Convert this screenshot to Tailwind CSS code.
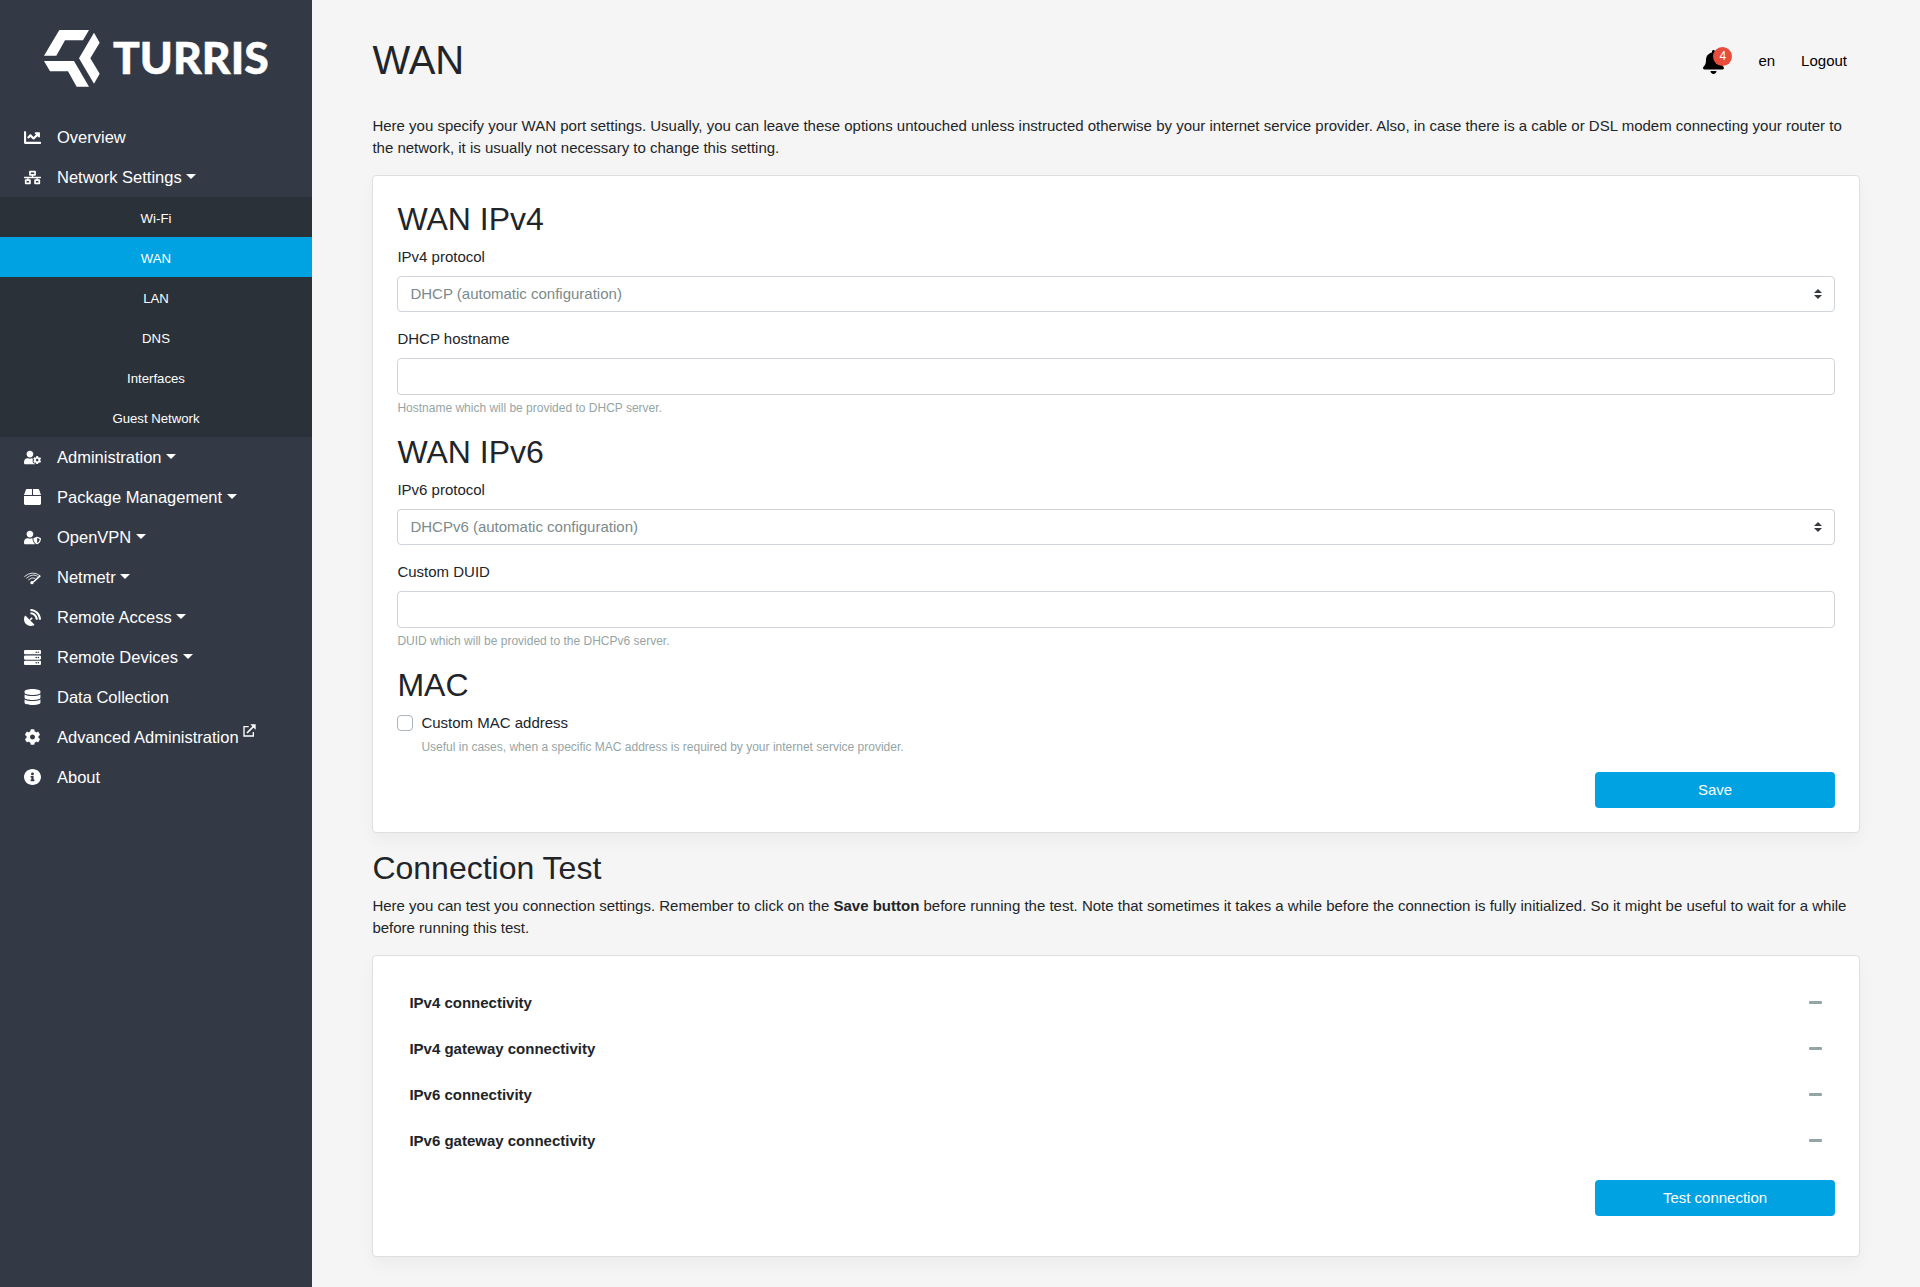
<!DOCTYPE html>
<html lang="en">
<head>
<meta charset="utf-8">
<title>WAN</title>
<script src="https://cdn.jsdelivr.net/npm/@tailwindcss/browser@4"></script>
</head>
<body class="flex h-[1287px] overflow-hidden bg-[#f5f5f5] font-['Liberation_Sans',Arial,sans-serif] text-[15px] leading-[22px] text-[#212529]">
<aside class="flex w-[312px] shrink-0 flex-col bg-[#333a46] text-[16.5px] text-white">
  <a class="mb-[30px] block pt-[29px] pl-11">
    <svg class="block h-[58px] w-[226px]" viewBox="132 87 678 174" fill="#fff">
      <path d="M178 90H267L249 121H195L169 167H132ZM132 183H222L267 260H230L204 214H150ZM282 98L299 128L271 175L299 221L282 251L237 175Z"/>
      <text x="339" y="222" font-family="Lato" font-weight="900" font-size="130" textLength="467" lengthAdjust="spacingAndGlyphs" stroke="#fff" stroke-width="1.5">TURRIS</text>
    </svg>
  </a>
  <nav class="flex flex-col">
    <a class="flex h-10 items-center pl-6"><svg class="mr-4 size-[17px]" viewBox="0 0 512 512" fill="currentColor"><path d="M496 384H64V80c0-8.84-7.16-16-16-16H16C7.16 64 0 71.16 0 80v336c0 17.67 14.33 32 32 32h464c8.84 0 16-7.16 16-16v-32c0-8.84-7.16-16-16-16zM464 96H345.94c-21.38 0-32.09 25.85-16.97 40.97l32.4 32.4L288 242.75l-73.37-73.37c-12.5-12.5-32.76-12.5-45.25 0l-68.69 68.69c-6.25 6.25-6.25 16.38 0 22.63l22.62 22.62c6.25 6.25 16.38 6.25 22.63 0L192 237.25l73.37 73.37c12.5 12.5 32.76 12.5 45.25 0l96-96 32.4 32.4c15.12 15.12 40.97 4.41 40.97-16.97V112c.01-8.84-7.15-16-15.99-16z"/></svg>Overview</a>
    <a class="flex h-10 items-center pl-6"><svg class="mr-4 size-[17px]" viewBox="0 0 640 512" fill="currentColor"><path d="M640 264v-16c0-8.84-7.16-16-16-16H344v-40h72c17.67 0 32-14.33 32-32V32c0-17.67-14.33-32-32-32H224c-17.67 0-32 14.33-32 32v128c0 17.67 14.33 32 32 32h72v40H16c-8.84 0-16 7.16-16 16v16c0 8.84 7.16 16 16 16h104v40H64c-17.67 0-32 14.33-32 32v128c0 17.67 14.33 32 32 32h160c17.67 0 32-14.33 32-32V352c0-17.67-14.33-32-32-32h-56v-40h304v40h-56c-17.67 0-32 14.33-32 32v128c0 17.67 14.33 32 32 32h160c17.67 0 32-14.33 32-32V352c0-17.67-14.33-32-32-32h-56v-40h104c8.84 0 16-7.16 16-16zM256 128V64h128v64H256zm-64 320H96v-64h96v64zm352 0h-96v-64h96v64z"/></svg>Network Settings<i class="mb-0.5 ml-[4.6px] border-x-[5px] border-t-[5px] border-x-transparent border-t-white"></i></a>
    <div class="flex flex-col bg-[#2b3139] text-center text-[13.2px] leading-[43px]">
      <a class="h-10">Wi-Fi</a>
      <a class="h-10 bg-[#00a2e2]">WAN</a>
      <a class="h-10">LAN</a>
      <a class="h-10">DNS</a>
      <a class="h-10">Interfaces</a>
      <a class="h-10">Guest Network</a>
    </div>
    <a class="flex h-10 items-center pl-6"><svg class="mr-4 size-[17px]" viewBox="0 0 640 512" fill="currentColor"><path d="M610.5 373.3c2.6-14.1 2.6-28.5 0-42.6l25.8-14.9c3-1.7 4.3-5.2 3.3-8.5-6.7-21.6-18.2-41.2-33.2-57.4-2.3-2.5-6-3.1-9-1.4l-25.8 14.9c-10.9-9.3-23.4-16.5-36.9-21.3v-29.8c0-3.4-2.4-6.4-5.7-7.1-22.3-5-45-4.8-66.2 0-3.3.7-5.7 3.7-5.7 7.1v29.8c-13.5 4.8-26 12-36.9 21.3l-25.8-14.9c-2.9-1.7-6.7-1.1-9 1.4-15 16.2-26.5 35.8-33.2 57.4-1 3.3.4 6.8 3.3 8.5l25.8 14.9c-2.6 14.1-2.6 28.5 0 42.6l-25.8 14.9c-3 1.7-4.3 5.2-3.3 8.5 6.7 21.6 18.2 41.1 33.2 57.4 2.3 2.5 6 3.1 9 1.4l25.8-14.9c10.9 9.3 23.4 16.5 36.9 21.3v29.8c0 3.4 2.4 6.4 5.7 7.1 22.3 5 45 4.8 66.2 0 3.3-.7 5.7-3.7 5.7-7.1v-29.8c13.5-4.8 26-12 36.9-21.3l25.8 14.9c2.9 1.7 6.7 1.1 9-1.4 15-16.2 26.5-35.8 33.2-57.4 1-3.3-.4-6.8-3.3-8.5l-25.8-14.9zM496 400.5c-26.8 0-48.5-21.8-48.5-48.5s21.8-48.5 48.5-48.5 48.5 21.8 48.5 48.5-21.7 48.5-48.5 48.5zM224 256c70.7 0 128-57.3 128-128S294.7 0 224 0 96 57.3 96 128s57.3 128 128 128zm201.2 226.5c-2.3-1.2-4.6-2.6-6.8-3.9l-7.9 4.6c-6 3.4-12.8 5.3-19.6 5.3-10.9 0-21.4-4.6-28.9-12.6-18.3-19.8-32.3-43.9-40.2-69.6-5.5-17.7 1.9-36.4 17.9-45.7l7.9-4.6c-.1-2.6-.1-5.2 0-7.8l-7.9-4.6c-16-9.2-23.4-28-17.9-45.7.9-2.9 2.2-5.8 3.2-8.7-3.8-.3-7.5-1.2-11.4-1.2h-16.7c-22.2 10.2-46.9 16-72.9 16s-50.6-5.8-72.9-16h-16.7C60.2 288 0 348.2 0 422.4V464c0 26.5 21.5 48 48 48h352c10.1 0 19.5-3.2 27.2-8.5-1.2-3.8-2-7.7-2-11.8v-9.2z"/></svg>Administration<i class="mb-0.5 ml-[4.6px] border-x-[5px] border-t-[5px] border-x-transparent border-t-white"></i></a>
    <a class="flex h-10 items-center pl-6"><svg class="mr-4 h-4 w-[17px]" viewBox="0 0 512 512" preserveAspectRatio="none" fill="currentColor"><path d="M509.500 184.600L458.900 32.800C452.400 13.200 434.100 0 413.400 0H272v192h238.700c-.4-2.500-.4-5-1.200-7.400zM240 0H98.600c-20.700 0-39 13.200-45.500 32.800L2.500 184.600c-.8 2.400-.8 4.900-1.200 7.400H240V0zM0 224v240c0 26.500 21.500 48 48 48h416c26.500 0 48-21.500 48-48V224H0z"/></svg>Package Management<i class="mb-0.5 ml-[4.6px] border-x-[5px] border-t-[5px] border-x-transparent border-t-white"></i></a>
    <a class="flex h-10 items-center pl-6"><svg class="mr-4 size-[17px]" viewBox="0 0 640 512" fill="currentColor"><path d="M622.3 271.1l-115.2-45c-4.1-1.6-12.6-3.7-22.2 0l-115.2 45c-10.700 4.200-17.700 14-17.700 24.900 0 111.600 68.700 188.800 132.900 213.900 9.600 3.700 18 1.600 22.200 0C558.400 489.900 640 420.500 640 296c0-10.900-7-20.700-17.700-24.900zM496 462.400V273.300l95.500 37.300c-5.600 87.100-60.900 135.400-95.500 151.800zM224 256c70.700 0 128-57.300 128-128S294.700 0 224 0 96 57.300 96 128s57.300 128 128 128zm96 40c0-2.500.8-4.800 1.100-7.200-2.500-.1-4.900-.8-7.500-.8h-16.700c-22.200 10.200-46.900 16-72.900 16s-50.600-5.800-72.900-16h-16.700C60.200 288 0 348.200 0 422.400V464c0 26.500 21.500 48 48 48h352c6.800 0 13.300-1.500 19.200-4-54-42.900-99.200-116.700-99.200-212z"/></svg>OpenVPN<i class="mb-0.5 ml-[4.6px] border-x-[5px] border-t-[5px] border-x-transparent border-t-white"></i></a>
    <a class="flex h-10 items-center pl-6"><svg class="mr-4 size-[17px]" viewBox="0 -3 51 51" fill="none" stroke="#fff"><path d="M1 20Q25 0 48 17M7 25Q25 9 41 19M13 30Q24 20 34 25" stroke-width="2.500"/><path d="M49 17L28 36" stroke-width="4.500"/><circle cx="24" cy="38" r="5" fill="#fff" stroke="none"/></svg>Netmetr<i class="mb-0.5 ml-[4.6px] border-x-[5px] border-t-[5px] border-x-transparent border-t-white"></i></a>
    <a class="flex h-10 items-center pl-6"><svg class="mr-4 size-[17px]" viewBox="0 0 512 512" fill="currentColor"><path d="M305.45 462.59c7.39 7.3 6.19 20.1-3 25-77.71 41.8-176.73 29.91-242.34-35.7C-5.500 386.280-17.400 287.360 24.410 209.550c4.900-9.100 17.700-10.300 25-3L166.230 323.370l27.390-27.390c-.69-2.610-1.590-5-1.590-7.820a32 32 0 1 1 32 32c-2.800 0-5.200-.89-7.800-1.590l-27.410 27.410ZM511.980 303.070a16.100 16.100 0 0 1-16 17H463.860a15.970 15.970 0 0 1-15.890-15C440.470 175.550 336.450 70.530 207.030 63.530a15.840 15.840 0 0 1-15-15.900V16.030A16.090 16.090 0 0 1 209.030.02C372.250 8.620 503.470 139.840 511.980 303.070Zm-96.020-.3a16.210 16.210 0 0 1-16.110 17.300H367.650a16.070 16.070 0 0 1-15.900-14.700c-6.900-77.010-68.110-138.910-144.920-145.230a15.940 15.940 0 0 1-14.800-15.890V112.130a16.130 16.130 0 0 1 17.300-16.090C319.450 104.540 407.560 192.650 415.960 302.770Z"/></svg>Remote Access<i class="mb-0.5 ml-[4.6px] border-x-[5px] border-t-[5px] border-x-transparent border-t-white"></i></a>
    <a class="flex h-10 items-center pl-6"><svg class="mr-4 size-[17px]" viewBox="0 0 512 512" fill="currentColor" fill-rule="evenodd"><path d="M32 32h448a32 32 0 0 1 32 32v64a32 32 0 0 1-32 32H32a32 32 0 0 1-32-32V64a32 32 0 0 1 32-32zM344 96a24 24 0 1 0 48 0 24 24 0 1 0-48 0zM408 96a24 24 0 1 0 48 0 24 24 0 1 0-48 0zM32 192h448a32 32 0 0 1 32 32v64a32 32 0 0 1-32 32H32a32 32 0 0 1-32-32v-64a32 32 0 0 1 32-32zM344 256a24 24 0 1 0 48 0 24 24 0 1 0-48 0zM408 256a24 24 0 1 0 48 0 24 24 0 1 0-48 0zM32 352h448a32 32 0 0 1 32 32v64a32 32 0 0 1-32 32H32a32 32 0 0 1-32-32v-64a32 32 0 0 1 32-32zM344 416a24 24 0 1 0 48 0 24 24 0 1 0-48 0zM408 416a24 24 0 1 0 48 0 24 24 0 1 0-48 0z"/></svg>Remote Devices<i class="mb-0.5 ml-[4.6px] border-x-[5px] border-t-[5px] border-x-transparent border-t-white"></i></a>
    <a class="flex h-10 items-center pl-6"><svg class="mr-4 h-4 w-[17px]" viewBox="-16 0 480 512" preserveAspectRatio="none" fill="currentColor"><path d="M448 73.143v45.714C448 159.143 347.667 192 224 192S0 159.143 0 118.857V73.143C0 32.857 100.333 0 224 0s224 32.857 224 73.143zM448 176v102.857C448 319.143 347.667 352 224 352S0 319.143 0 278.857V176c48.125 33.143 136.208 48.572 224 48.572S399.874 209.143 448 176zm0 160v102.857C448 479.143 347.667 512 224 512S0 479.143 0 438.857V336c48.125 33.143 136.208 48.572 224 48.572S399.874 369.143 448 336z"/></svg>Data Collection</a>
    <a class="flex h-10 items-center pl-6"><svg class="mr-4 h-4 w-[17px]" viewBox="0 0 512 512" fill="currentColor"><path d="M487.4 315.7l-42.6-24.6c4.3-23.2 4.3-47 0-70.2l42.6-24.6c4.9-2.8 7.1-8.6 5.5-14-11.1-35.6-30-67.8-54.7-94.6-3.8-4.1-10-5.1-14.8-2.3L380.8 110c-17.9-15.4-38.5-27.3-60.8-35.1V25.8c0-5.6-3.9-10.5-9.4-11.700-36.700-8.200-74.300-7.800-109.200 0-5.500 1.200-9.400 6.100-9.400 11.700V75c-22.200 7.900-42.800 19.800-60.800 35.100L88.700 85.500c-4.900-2.800-11-1.900-14.800 2.300-24.700 26.700-43.600 58.900-54.700 94.600-1.700 5.400.6 11.200 5.500 14L67.300 221c-4.300 23.200-4.300 47 0 70.200l-42.600 24.600c-4.900 2.800-7.100 8.600-5.500 14 11.100 35.600 30 67.800 54.700 94.600 3.800 4.100 10 5.100 14.800 2.300l42.600-24.600c17.900 15.400 38.500 27.300 60.800 35.100v49.200c0 5.600 3.900 10.500 9.400 11.700 36.700 8.200 74.300 7.800 109.200 0 5.500-1.200 9.400-6.100 9.400-11.700v-49.200c22.200-7.900 42.800-19.800 60.800-35.100l42.600 24.600c4.900 2.800 11 1.900 14.800-2.300 24.700-26.700 43.600-58.900 54.700-94.600 1.500-5.500-.7-11.300-5.600-14.100zM256 336c-44.100 0-80-35.900-80-80s35.900-80 80-80 80 35.900 80 80-35.900 80-80 80z"/></svg>Advanced Administration<svg class="mb-[14px] ml-1 h-[13px] w-[13px]" viewBox="0 0 39 39" fill="none" stroke="#fff" stroke-width="4"><path d="M17 8H3V36H31V24"/><path d="M12 27L31 8" stroke-width="5"/><path d="M22 1H38V17Z" fill="#fff" stroke="none"/></svg></a>
    <a class="flex h-10 items-center pl-6"><svg class="mr-4 h-4 w-[17px]" viewBox="8 8 496 496" preserveAspectRatio="none" fill="currentColor"><path d="M256 8C119.043 8 8 119.083 8 256c0 136.997 111.043 248 248 248s248-111.003 248-248C504 119.083 392.957 8 256 8zm0 110c23.196 0 42 18.804 42 42s-18.804 42-42 42-42-18.804-42-42 18.804-42 42-42zm56 254c0 6.627-5.373 12-12 12h-88c-6.627 0-12-5.373-12-12v-24c0-6.627 5.373-12 12-12h12v-64h-12c-6.627 0-12-5.373-12-12v-24c0-6.627 5.373-12 12-12h64c6.627 0 12 5.373 12 12v100h12c6.627 0 12 5.373 12 12v24z"/></svg>About</a>
  </nav>
</aside>
<main class="flex-1 pt-9 pr-[60px] pl-[60.4px]">
  <header class="mb-[31px] flex h-12 items-center justify-between">
    <h1 class="text-[40px] leading-[48px]">WAN</h1>
    <div class="flex items-center pr-[13px] text-black">
      <div class="relative mt-1 mr-[34px]">
        <svg class="block h-6 w-[21px]" viewBox="0 0 448 512"><path d="M224 512c35.32 0 63.97-28.65 63.97-64H160.03c0 35.35 28.65 64 63.97 64zm215.39-149.71c-19.32-20.76-55.47-51.99-55.47-154.29 0-77.7-54.48-139.9-127.94-155.16V32c0-17.67-14.32-32-31.98-32s-31.98 14.33-31.98 32v20.84C118.56 68.1 64.08 130.3 64.08 208c0 102.3-36.15 133.53-55.47 154.29-6 6.45-8.66 14.16-8.61 21.71.11 16.4 12.98 32 32.1 32h383.8c19.12 0 32-15.6 32.1-32 .05-7.55-2.61-15.27-8.61-21.71z"/></svg>
        <span class="absolute -top-[3px] left-[10px] size-[19px] rounded-full bg-[#e74c3c] text-center text-xs leading-[19px] text-white">4</span>
      </div>
      <a class="mt-0.5 mr-[26px]">en</a>
      <a class="mt-0.5">Logout</a>
    </div>
  </header>
  <p class="mb-4">Here you specify your WAN port settings. Usually, you can leave these options untouched unless instructed otherwise by your internet service provider. Also, in case there is a cable or DSL modem connecting your router to the network, it is usually not necessary to change this setting.</p>
  <section class="mb-4 rounded border border-[#dfdfdf] bg-white p-6 shadow-[0_8px_16px_rgba(0,0,0,0.04)]">
    <h2 class="mb-2 text-[32px] leading-[38px]">WAN IPv4</h2>
    <label class="mb-2 block">IPv4 protocol</label>
    <div class="mb-4 flex h-9 items-center justify-between rounded border border-[#ced4da] px-3 text-[#7b8a8b]">DHCP (automatic configuration)<svg class="h-[10px] w-2" viewBox="0 0 4 5"><path fill="#343a40" d="M2 0L0 2h4zm0 5L0 3h4z"/></svg></div>
    <label class="mb-2 block">DHCP hostname</label>
    <input class="block h-[37px] w-full rounded border border-[#ced4da] bg-white px-3">
    <small class="mt-1 mb-4 block text-xs leading-[18px] text-[#95a5a6]">Hostname which will be provided to DHCP server.</small>
    <h2 class="mb-2 text-[32px] leading-[38px]">WAN IPv6</h2>
    <label class="mb-2 block">IPv6 protocol</label>
    <div class="mb-4 flex h-9 items-center justify-between rounded border border-[#ced4da] px-3 text-[#7b8a8b]">DHCPv6 (automatic configuration)<svg class="h-[10px] w-2" viewBox="0 0 4 5"><path fill="#343a40" d="M2 0L0 2h4zm0 5L0 3h4z"/></svg></div>
    <label class="mb-2 block">Custom DUID</label>
    <input class="block h-[37px] w-full rounded border border-[#ced4da] bg-white px-3">
    <small class="mt-1 mb-4 block text-xs leading-[18px] text-[#95a5a6]">DUID which will be provided to the DHCPv6 server.</small>
    <h2 class="mb-2 text-[32px] leading-[38px]">MAC</h2>
    <label class="flex items-center gap-2"><span class="size-4 rounded border border-[#adb5bd] bg-white"></span>Custom MAC address</label>
    <small class="mt-1 mb-4 block pl-6 text-xs leading-[18px] text-[#95a5a6]">Useful in cases, when a specific MAC address is required by your internet service provider.</small>
    <button class="ml-auto block h-9 w-60 rounded bg-[#00a2e2] text-white">Save</button>
  </section>
  <h2 class="mb-2 text-[32px] leading-[38px]">Connection Test</h2>
  <p class="mb-4">Here you can test you connection settings. Remember to click on the <b>Save button</b> before running the test. Note that sometimes it takes a while before the connection is fully initialized. So it might be useful to wait for a while before running this test.</p>
  <section class="rounded border border-[#dfdfdf] bg-white p-6 pb-10 shadow-[0_8px_16px_rgba(0,0,0,0.04)]">
    <div class="mb-4 font-bold">
      <div class="flex h-[46px] items-center justify-between px-3">IPv4 connectivity<i class="mr-px mb-0.5 h-[3px] w-[13px] rounded-[1px] bg-[#95a5a6]"></i></div>
      <div class="flex h-[46px] items-center justify-between px-3">IPv4 gateway connectivity<i class="mr-px mb-0.5 h-[3px] w-[13px] rounded-[1px] bg-[#95a5a6]"></i></div>
      <div class="flex h-[46px] items-center justify-between px-3">IPv6 connectivity<i class="mr-px mb-0.5 h-[3px] w-[13px] rounded-[1px] bg-[#95a5a6]"></i></div>
      <div class="flex h-[46px] items-center justify-between px-3">IPv6 gateway connectivity<i class="mr-px mb-0.5 h-[3px] w-[13px] rounded-[1px] bg-[#95a5a6]"></i></div>
    </div>
    <button class="ml-auto block h-9 w-60 rounded bg-[#00a2e2] text-white">Test connection</button>
  </section>
</main>
</body>
</html>
